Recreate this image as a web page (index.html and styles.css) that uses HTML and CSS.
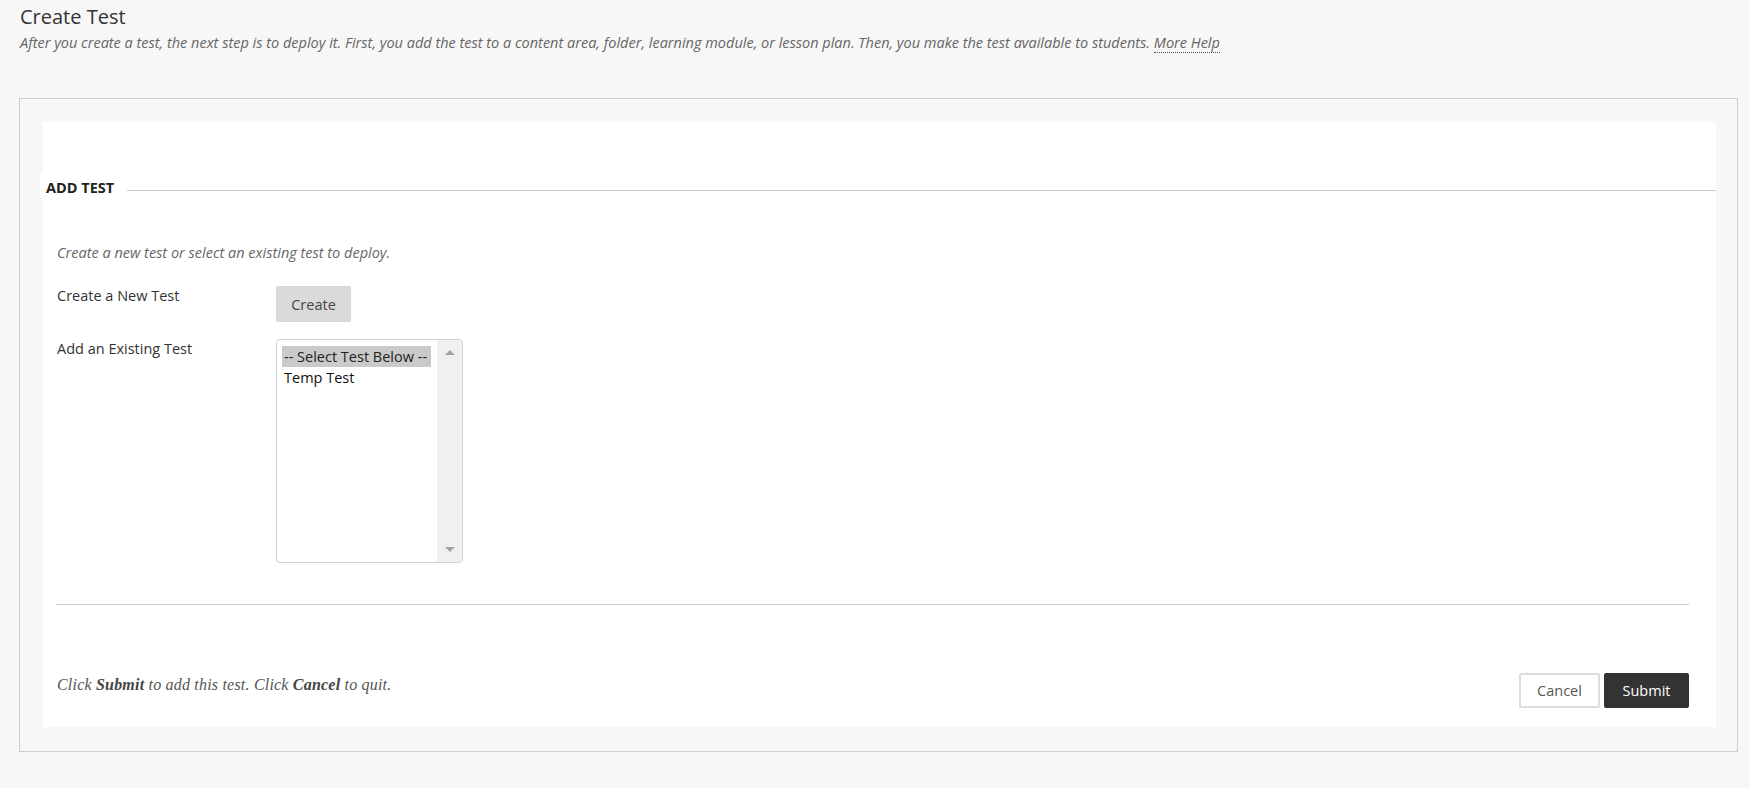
FILE: index.html
```html
<!DOCTYPE html>
<html lang="en">
<head>
    <meta charset="UTF-8">
    <title>Create Test</title>
    <link rel="stylesheet" href="styles.css">
</head>
<body>
    <div class="page">
        <div class="page-header">
            <h1 class="page-title">Create Test</h1>
            <p class="page-help">After you create a test, the next step is to deploy it. First, you add the test to a content area, folder, learning module, or lesson plan. Then, you make the test available to students. <a class="more-help" href="#">More Help</a></p>
        </div>

        <div class="form-wrap">
            <div class="form-panel">
                <div class="step-title">
                    <h2>ADD TEST</h2>
                    <span class="step-line"></span>
                </div>

                <div class="step-body">
                    <p class="step-intro">Create a new test or select an existing test to deploy.</p>

                    <div class="field-row">
                        <div class="field-label">Create a New Test</div>
                        <div class="field-control">
                            <button class="btn-create">Create</button>
                        </div>
                    </div>

                    <div class="field-row">
                        <div class="field-label">Add an Existing Test</div>
                        <div class="field-control">
                            <div class="listbox">
                                <div class="listbox-options">
                                    <div class="listbox-option selected">-- Select Test Below --</div>
                                    <div class="listbox-option">Temp Test</div>
                                </div>
                                <div class="listbox-scroll">
                                    <span class="arrow-up"></span>
                                    <span class="arrow-down"></span>
                                </div>
                            </div>
                        </div>
                    </div>
                </div>

                <div class="submit-row">
                    <p class="submit-hint">Click <b>Submit</b> to add this test. Click <b>Cancel</b> to quit.</p>
                    <div class="submit-buttons">
                        <button class="btn-cancel">Cancel</button>
                        <button class="btn-submit">Submit</button>
                    </div>
                </div>
            </div>
        </div>
    </div>
</body>
</html>
```

FILE: styles.css
```css
body {
    margin: 0;
    background-color: #ffffff;
    font-family: "Open Sans", Arial, sans-serif;
    color: #333333;
}

.page {
    background-color: #f7f7f7;
    padding-bottom: 36px;
}

/* header */
.page-header {
    padding: 3px 0 0 20px;
}

.page-title {
    margin: 0;
    font-size: 20px;
    font-weight: normal;
    line-height: 27px;
    color: #333333;
}

.page-help {
    margin: 3px 0 0;
    font-size: 14.5px;
    line-height: 20px;
    font-style: italic;
    color: #666666;
}

.more-help {
    color: #666666;
    text-decoration: none;
    border-bottom: 1px dotted #555555;
}

/* form frame */
.form-wrap {
    margin: 45px 12px 0 19px;
    border: 1px solid #cdcdcd;
    padding: 23px 21px 24px 23px;
}

.form-panel {
    background-color: #ffffff;
    padding: 52px 0 19px;
}

.step-title {
    display: flex;
    align-items: flex-start;
    height: 24px;
}

.step-title h2 {
    margin: 0 0 0 -3px;
    padding: 3px 13px 0 6px;
    height: 21px;
    line-height: 21px;
    font-size: 14.5px;
    font-weight: bold;
    color: #222222;
    background-color: #ffffff;
}

.step-line {
    flex: 1;
    margin-top: 16px;
    border-top: 1px solid #cccccc;
}

.step-body {
    margin: 0 27px 0 13px;
    padding: 0 0 41px 1px;
    border-bottom: 1px solid #cccccc;
}

.step-intro {
    margin: 45px 0 0;
    font-size: 14.5px;
    line-height: 20px;
    font-style: italic;
    color: #666666;
}

.field-row {
    display: flex;
    align-items: flex-start;
    margin-top: 17px;
}

.step-intro + .field-row {
    margin-top: 23px;
}

.field-label {
    width: 219px;
    font-size: 14.5px;
    line-height: 20px;
    color: #333333;
}

.btn-create {
    width: 75px;
    height: 36px;
    border: none;
    border-radius: 2px;
    background-color: #dadada;
    font-family: "Open Sans", Arial, sans-serif;
    font-size: 14.5px;
    color: #444444;
    padding: 0;
}

/* multi-line select */
.listbox {
    display: flex;
    width: 185px;
    height: 222px;
    border: 1px solid #d0d0d0;
    border-radius: 4px;
    overflow: hidden;
}

.listbox-options {
    flex: 1;
    padding: 6px 6px 0 5px;
}

.listbox-option {
    height: 21px;
    line-height: 21px;
    padding-left: 2px;
    font-size: 14.5px;
    color: #111111;
}

.listbox-option.selected {
    background-color: #cacaca;
    color: #222222;
}

.listbox-scroll {
    width: 25px;
    background-color: #f0f0f0;
    display: flex;
    flex-direction: column;
    justify-content: space-between;
    align-items: center;
    padding: 10px 0 10px;
}

.arrow-up,
.arrow-down {
    width: 0;
    height: 0;
    border-left: 5px solid transparent;
    border-right: 5px solid transparent;
}

.arrow-up {
    border-bottom: 5px solid #a3a3a3;
}

.arrow-down {
    border-top: 5px solid #a3a3a3;
}

/* footer */
.submit-row {
    display: flex;
    justify-content: space-between;
    align-items: flex-start;
    margin: 68px 27px 0 13px;
    padding-left: 1px;
}

.submit-hint {
    margin: 2px 0 0;
    font-family: "Liberation Serif", "Times New Roman", serif;
    font-size: 16px;
    letter-spacing: 0.2px;
    line-height: 20px;
    font-style: italic;
    color: #555555;
}

.submit-hint b {
    color: #444444;
}

.submit-buttons {
    display: flex;
    gap: 4px;
}

.btn-cancel,
.btn-submit {
    height: 35px;
    padding: 0;
    border-radius: 2px;
    font-family: "Open Sans", Arial, sans-serif;
    font-size: 14.5px;
}

.btn-cancel {
    width: 81px;
    border: 2px solid #dcdcdc;
    background-color: #ffffff;
    color: #555555;
}

.btn-submit {
    width: 85px;
    border: none;
    background-color: #333333;
    color: #ffffff;
}
```
